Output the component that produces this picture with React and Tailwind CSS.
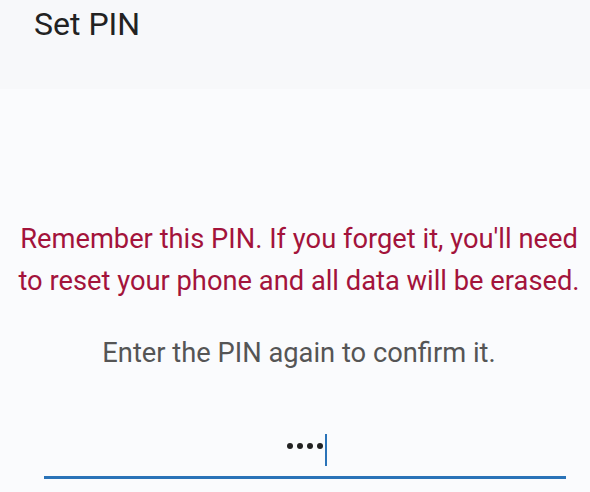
export default function App() {
  return (
    <div className="w-[590px] h-[492px] overflow-hidden bg-[#fafbfd] font-['Roboto',sans-serif]">
      <div className="h-[89px] bg-[#f7f8fa] pl-[34px] pt-[4px]">
        <h1 className="text-[32px] leading-[40px] text-[#222]">Set PIN</h1>
      </div>

      <div className="pt-[129px] pl-[8px] flex flex-col items-center">
        <p className="text-[27.3px] leading-[42px] text-[#a3133b] text-center w-[570px]">
          Remember this PIN. If you forget it, you'll need to reset your phone and all data will be erased.
        </p>
        <p className="mt-[35px] text-[27.3px] leading-[32px] text-[#555] text-center">
          Enter the PIN again to confirm it.
        </p>
      </div>

      <div className="mt-[65px] ml-[44px] w-[522px] border-b-[3px] border-[#2a73b8] h-[45px] flex items-start justify-center pl-[4px]">
        <div className="flex items-start h-[32px] gap-[4px]">
          <span className="mt-[9px] w-[6px] h-[6px] rounded-full bg-[#222]" />
          <span className="mt-[9px] w-[6px] h-[6px] rounded-full bg-[#222]" />
          <span className="mt-[9px] w-[6px] h-[6px] rounded-full bg-[#222]" />
          <span className="mt-[9px] w-[6px] h-[6px] rounded-full bg-[#222]" />
          <span className="w-[2px] h-[32px] bg-[#2a73b8] ml-[-2px]" />
        </div>
      </div>
    </div>
  );
}
